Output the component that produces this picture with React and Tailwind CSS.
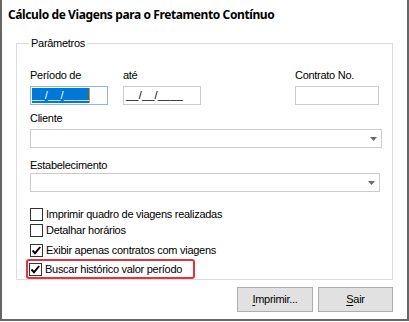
import React from "react";

const lbl = "text-[11px] leading-[13px] tracking-[-0.28px] text-black";

function Check({ checked, label }) {
  return (
    <div className="flex items-center h-[13px]">
      <div className="w-[13px] h-[13px] border border-[#333333] bg-white flex items-center justify-center shrink-0">
        {checked && (
          <svg width="11" height="11" viewBox="0 0 11 11">
            <path d="M1.5 5.5 L4 8.2 L9.2 2" fill="none" stroke="#000" strokeWidth="1.9" />
          </svg>
        )}
      </div>
      <span className={`${lbl} ml-[3px]`}>{label}</span>
    </div>
  );
}

function Arrow() {
  return (
    <svg width="7" height="4" viewBox="0 0 7 4" className="block">
      <path d="M0 0 H7 L3.5 4 Z" fill="#6a6a6a" />
    </svg>
  );
}

export default function App() {
  return (
    <div className="w-[409px] h-[322px] bg-white" style={{ fontFamily: '"Liberation Sans", Arial, sans-serif' }}>
      <div className="h-[321px] border-l-2 border-r-2 border-b-2 border-[#666666] flex flex-col">
        <div className="pt-[7px] pl-[6px]">
          <div className="text-[12px] leading-[16px] font-bold text-black tracking-[-0.4px]" style={{ fontFamily: '"Noto Sans", sans-serif' }}>
            Cálculo de Viagens para o Fretamento Contínuo
          </div>
        </div>
        <div className="mt-[20px] ml-[14px] w-[377px] border border-[#dcdcdc] flex flex-col pl-[13px]">
          <span className={`${lbl} -mt-[7px] -ml-[1px] px-[2px] bg-white w-fit block`}>Parâmetros</span>
          <div className="mt-[19px] flex">
            <div className="w-[93px] flex flex-col">
              <span className={lbl}>Período de</span>
              <div className="mt-[4px] w-[78px] h-[19px] border border-[#8ab8e6] bg-white flex items-center pl-[1px]">
                <span className="bg-[#0078d7] text-white text-[11px] leading-[15px] w-[58px] border-r border-[#ff8c00] tracking-[0.2px]">__/__/____</span>
              </div>
            </div>
            <div className="w-[172px] flex flex-col">
              <span className={lbl}>até</span>
              <div className="mt-[4px] w-[78px] h-[19px] border border-[#cccccc] bg-white flex items-center pl-[2px]">
                <span className="text-black text-[11px] leading-[15px] tracking-[0.2px]">__/__/____</span>
              </div>
            </div>
            <div className="flex flex-col">
              <span className={lbl}>Contrato No.</span>
              <div className="mt-[4px] w-[84px] h-[19px] border border-[#cccccc] bg-white" />
            </div>
          </div>
          <span className={`${lbl} mt-[7px]`}>Cliente</span>
          <div className="mt-[4px] w-[352px] h-[19px] border border-[#cccccc] bg-white flex items-center justify-end pr-[4px]">
            <Arrow />
          </div>
          <span className={`${lbl} mt-[11px]`}>Estabelecimento</span>
          <div className="mt-[1px] w-[350px] h-[19px] border border-[#cccccc] bg-white flex items-center justify-end pr-[4px]">
            <Arrow />
          </div>
          <div className="mt-[16px] flex flex-col">
            <Check label="Imprimir quadro de viagens realizadas" />
            <div className="mt-[3px]"><Check label="Detalhar horários" /></div>
            <div className="mt-[7px]"><Check checked label="Exibir apenas contratos com viagens" /></div>
            <div className="mt-[2px] -ml-[4px] w-[169px] h-[20px] border-2 border-[#e5323b] rounded-[3px] pl-[1px] pt-[2px]">
              <Check checked label="Buscar histórico valor período" />
            </div>
          </div>
        </div>
        <div className="ml-[14px] w-[377px] mt-[7px] flex justify-end gap-[5px]">
          <button className="w-[76px] h-[25px] border border-[#adadad] bg-[#e1e1e1] text-[11px] tracking-[-0.28px] text-black">
            <span className="underline underline-offset-[2px]">I</span>mprimir...
          </button>
          <button className="w-[75px] h-[25px] border border-[#adadad] bg-[#e1e1e1] text-[11px] tracking-[-0.28px] text-black">
            <span className="underline underline-offset-[2px]">S</span>air
          </button>
        </div>
      </div>
    </div>
  );
}
